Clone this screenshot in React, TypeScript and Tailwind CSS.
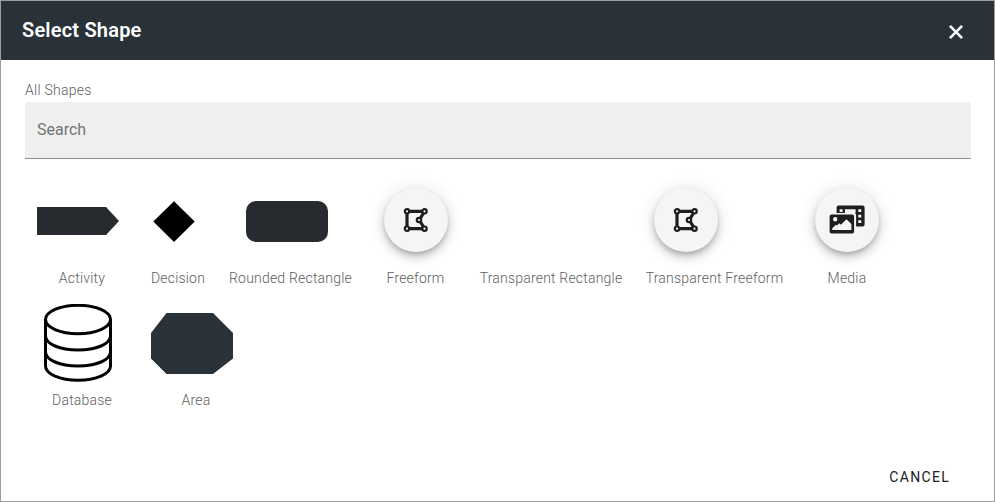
import type { ReactNode } from "react";

function FreeformIcon() {
  return (
    <svg width="26" height="26" viewBox="0 0 26 26" fill="none" stroke="#1c1e1f">
      <path d="M4 4.3H21.5L16.4 13L21.5 21.7H4Z" strokeWidth="3.2" />
      <g fill="#f5f5f5" strokeWidth="2.2">
        <circle cx="4" cy="4.3" r="2.2" />
        <circle cx="21.5" cy="4.3" r="2.2" />
        <circle cx="16" cy="13" r="2.2" />
        <circle cx="4" cy="21.7" r="2.2" />
        <circle cx="21.5" cy="21.7" r="2.2" />
      </g>
    </svg>
  );
}

function MediaIcon() {
  return (
    <svg width="36" height="30" viewBox="-0.6 0 36 30" fill="#1c1e1f">
      <path
        fillRule="evenodd"
        d="M9 .5H33Q35 .5 35 2.5V19.5Q35 21.5 33 21.5H26.5V10Q26.5 8 24.5 8H7V2.5Q7 .5 9 .5ZM10 4.3V7H13V4.3ZM15.3 4.3V8H26V4.3ZM28.7 4.3V7H31.7V4.3ZM28.7 9.8V12.5H31.7V9.8ZM28.7 15.3V18H31.7V15.3Z"
      />
      <path
        fillRule="evenodd"
        d="M2 9.5H22.5Q24.5 9.5 24.5 11.5V26.5Q24.5 28.5 22.5 28.5H2Q0 28.5 0 26.5V11.5Q0 9.5 2 9.5ZM5.6 12A2.2 2.2 0 1 0 5.6 16.4A2.2 2.2 0 1 0 5.6 12ZM2.7 25H21.8V19L16.8 14.2L11.3 19.7L9.7 18.3L7.5 20.5L6.3 19.7L2.7 23.3Z"
      />
    </svg>
  );
}

function RoundTile({ children }: { children: ReactNode }) {
  return (
    <div className="flex size-16 items-center justify-center rounded-full bg-[#f5f5f5] shadow-[0_3px_5px_-1px_rgba(0,0,0,0.2),0_6px_10px_0_rgba(0,0,0,0.14),0_1px_18px_0_rgba(0,0,0,0.12)]">
      {children}
    </div>
  );
}

interface ShapeItemProps {
  label: string;
  width: string;
  inset: string;
  children?: ReactNode;
}

function ShapeItem({ label, width, inset, children }: ShapeItemProps) {
  return (
    <li className={`flex h-[122px] shrink-0 flex-col ${width}`}>
      <div className={`flex h-[97px] items-start ${inset}`}>{children}</div>
      <span className="text-center text-sm leading-5 font-light tracking-[0.2px] whitespace-nowrap text-[#606060]">
        {label}
      </span>
    </li>
  );
}

export default function App() {
  return (
    <div className="flex h-[502px] w-[995px] flex-col border border-[#9e9e9e] bg-white font-['Roboto',sans-serif]">
      <header className="flex h-[59px] shrink-0 items-center justify-between bg-[#293238] pr-[31px] pl-[21px] text-white">
        <h1 className="pb-[2px] text-xl leading-8 font-semibold tracking-[0.2px]">Select Shape</h1>
        <button aria-label="Close" className="pt-[3px]">
          <svg width="14" height="14" viewBox="0 0 14 14" fill="none" stroke="white" strokeWidth="2.6">
            <path d="M.9 .9L13.1 13.1M13.1 .9L.9 13.1" />
          </svg>
        </button>
      </header>

      <main className="flex-1 px-6 pt-5">
        <p className="text-sm leading-5 font-light tracking-[0.25px] text-[#606060]">All Shapes</p>
        <input
          type="text"
          placeholder="Search"
          className="mt-[2px] block h-[57px] w-[946px] rounded-t border-b border-[#8c8c8c] bg-[#efefef] px-3 pb-[2px] text-base outline-none placeholder:text-[#757575]"
        />

        <ul className="mt-3 flex">
          <ShapeItem label="Activity" width="w-[114px]" inset="pt-9 pl-3">
            <svg width="82" height="28" viewBox="0 0 82 28">
              <path d="M0 0H69L82 14L69 28H0Z" fill="#272b2f" />
            </svg>
          </ShapeItem>
          <ShapeItem label="Decision" width="w-[78px]" inset="pt-[30px] pl-[14px]">
            <svg width="42" height="42" viewBox="0 0 42 42">
              <path d="M21 .3L41.7 20.5L21 41L.3 20.5Z" />
            </svg>
          </ShapeItem>
          <ShapeItem label="Rounded Rectangle" width="w-[147px]" inset="pt-[30px] pl-[29px]">
            <div className="h-[41px] w-[82px] rounded-[10px] bg-[#272b2f]" />
          </ShapeItem>
          <ShapeItem label="Freeform" width="w-[103px]" inset="pt-[17px] pl-5">
            <RoundTile><FreeformIcon /></RoundTile>
          </ShapeItem>
          <ShapeItem label="Transparent Rectangle" width="w-[168px]" inset="" />
          <ShapeItem label="Transparent Freeform" width="w-[159px]" inset="pt-[17px] pl-[19px]">
            <RoundTile><FreeformIcon /></RoundTile>
          </ShapeItem>
          <ShapeItem label="Media" width="w-[106px]" inset="pt-[17px] pl-[21px]">
            <RoundTile><MediaIcon /></RoundTile>
          </ShapeItem>
        </ul>
        <ul className="flex">
          <ShapeItem label="Database" width="w-[114px]" inset="pt-[11px] pl-[19px]">
            <svg width="68" height="78" viewBox="0 0 68 78" fill="none" stroke="black" strokeWidth="3">
              <ellipse cx="34" cy="15.5" rx="32.5" ry="14.2" />
              <path d="M1.5 15.5V62C1.5 70 16 76.3 34 76.3S66.5 70 66.5 62V15.5M1.5 32C1.5 40 16 46 34 46S66.5 40 66.5 32M1.5 48C1.5 56 16 62 34 62S66.5 56 66.5 48" />
            </svg>
          </ShapeItem>
          <ShapeItem label="Area" width="w-[114px]" inset="pt-5 pl-3">
            <svg width="82" height="61" viewBox="0 0 82 61">
              <path d="M15.5 0H62L82 20V45.5L62 61H15.5L0 45.5V20Z" fill="#293238" />
            </svg>
          </ShapeItem>
        </ul>
      </main>

      <footer className="flex h-12 shrink-0 items-center justify-end pr-[44px]">
        <button className="text-sm leading-5 tracking-[1.3px] text-[#212121]">CANCEL</button>
      </footer>
    </div>
  );
}
